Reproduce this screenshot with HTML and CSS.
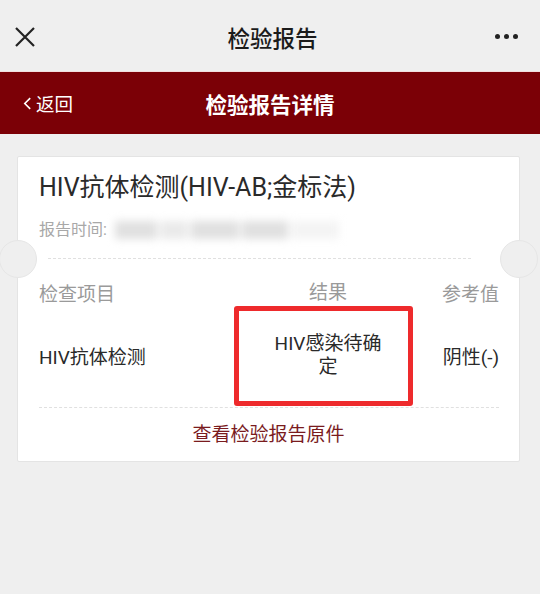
FILE: index.html
```html
<!DOCTYPE html>
<html lang="zh">
<head>
<meta charset="utf-8">
<link rel="stylesheet" href="styles.css">
</head>
<body>
<header class="topnav">
  <svg class="close" viewBox="0 0 22 22" width="22" height="22"><path d="M2 2L20 20M20 2L2 20" stroke="#222" stroke-width="2.2" fill="none"/></svg>
  <div class="topnav-title">检验报告</div>
  <div class="more"><i></i><i></i><i></i></div>
</header>
<div class="redbar">
  <div class="back"><svg viewBox="0 0 10 16" width="9" height="15"><path d="M8 2L2 8L8 14" stroke="#fff" stroke-width="1.8" fill="none"/></svg><span>返回</span></div>
  <div class="redbar-title">检验报告详情</div>
</div>
<main class="card">
  <div class="card-head">
    <h1 class="test-name">HIV抗体检测(HIV-AB;金标法)</h1>
    <div class="report-time">报告时间:<span class="blur"><b class="b1"></b><b class="b2"></b><b class="b3"></b><b class="b4"></b><b class="b5"></b></span></div>
  </div>
  <div class="divider"></div>
  <div class="table">
    <div class="row head">
      <div class="c1">检查项目</div>
      <div class="c2">结果</div>
      <div class="c3">参考值</div>
    </div>
    <div class="row data">
      <div class="c1">HIV抗体检测</div>
      <div class="c2">HIV感染待确定</div>
      <div class="c3">阴性(-)</div>
    </div>
    <div class="highlight"></div>
  </div>
  <div class="divider inner"></div>
  <div class="link">查看检验报告原件</div>
</main>
</body>
</html>
```
FILE: styles.css
```css
* { box-sizing: border-box; }
html, body { margin: 0; padding: 0; }
body {
  background: #efefef;
  font-family: "Roboto", "Noto Sans CJK SC", sans-serif;
  width: 540px;
  height: 594px;
  overflow: hidden;
}
.topnav {
  height: 72px;
  display: flex;
  align-items: center;
  justify-content: space-between;
  padding: 2px 22px 0 14px;
  background: #efefef;
  border-bottom: 1px solid #f3dede;
}
.topnav-title {
  font-size: 22.5px;
  color: #1b1b1b;
  font-weight: 500;
  margin-left: 14px;
}
.more { display: flex; gap: 4px; }
.more i { width: 5px; height: 5px; border-radius: 50%; background: #222; display: block; }
.redbar {
  height: 62px;
  background: #7b0006;
  display: flex;
  align-items: center;
  position: relative;
  color: #fff;
}
.back {
  display: flex;
  align-items: center;
  gap: 4px;
  padding-left: 23px;
  font-size: 18.5px;
}
.redbar-title {
  position: absolute;
  left: 0; right: 0;
  text-align: center;
  font-size: 21.5px;
  font-weight: 700;
  pointer-events: none;
}
.card {
  margin: 22px 20px 0 17px;
  background: #fff;
  border: 1px solid #e4e4e4;
  border-radius: 2px;
  position: relative;
  padding-bottom: 13px;
}
.card::before, .card::after {
  content: "";
  position: absolute;
  top: 83px;
  width: 36px;
  height: 36px;
  border-radius: 50%;
  background: #efefef;
  border: 1px solid #e6e6e6;
}
.card::before { left: -19px; }
.card::after { right: -19px; }
.card-head { padding: 15px 20px 0 21px; }
.test-name {
  margin: 0;
  font-size: 25px;
  font-weight: 400;
  color: #2a2a2a;
  line-height: 32px;
}
.report-time {
  margin-top: 16px;
  font-size: 16px;
  color: #a8a8a8;
  line-height: 20px;
  display: flex;
  align-items: center;
}
.blur {
  display: inline-flex;
  align-items: center;
  margin-left: 8px;
  filter: blur(4px);
  gap: 3px;
}
.blur b { display: block; height: 18px; background: #e0e0e0; }
.b1 { width: 42px; }
.b2 { width: 28px; background: #eaeaea !important; }
.b3 { width: 48px; }
.b4 { width: 46px; }
.b5 { width: 48px; background: #f4f4f4 !important; }
.divider {
  margin: 18px 48px 0 30px;
  border-top: 1px dashed #e0e0e0;
}
.divider.inner { margin: 0 20px 0 21px; }
.table { position: relative; padding: 0 20px 0 21px; }
.row {
  display: grid;
  grid-template-columns: 233px 112px 1fr;
  align-items: center;
  font-size: 19px;
}
.row.head {
  height: 66px;
  color: #9a9a9a;
}
.row.data {
  color: #2a2a2a;
  padding: 7px 0 29px;
}
.row .c2 { text-align: center; line-height: 23px; }
.row .c3 { text-align: right; }
.highlight {
  position: absolute;
  left: 216px;
  top: 47px;
  width: 179px;
  height: 100px;
  border: 5px solid #ee2a2c;
  border-radius: 3px;
}
.link {
  text-align: center;
  color: #7a1b1e;
  font-size: 19px;
  padding-top: 14px;
  line-height: 26px;
}
```
